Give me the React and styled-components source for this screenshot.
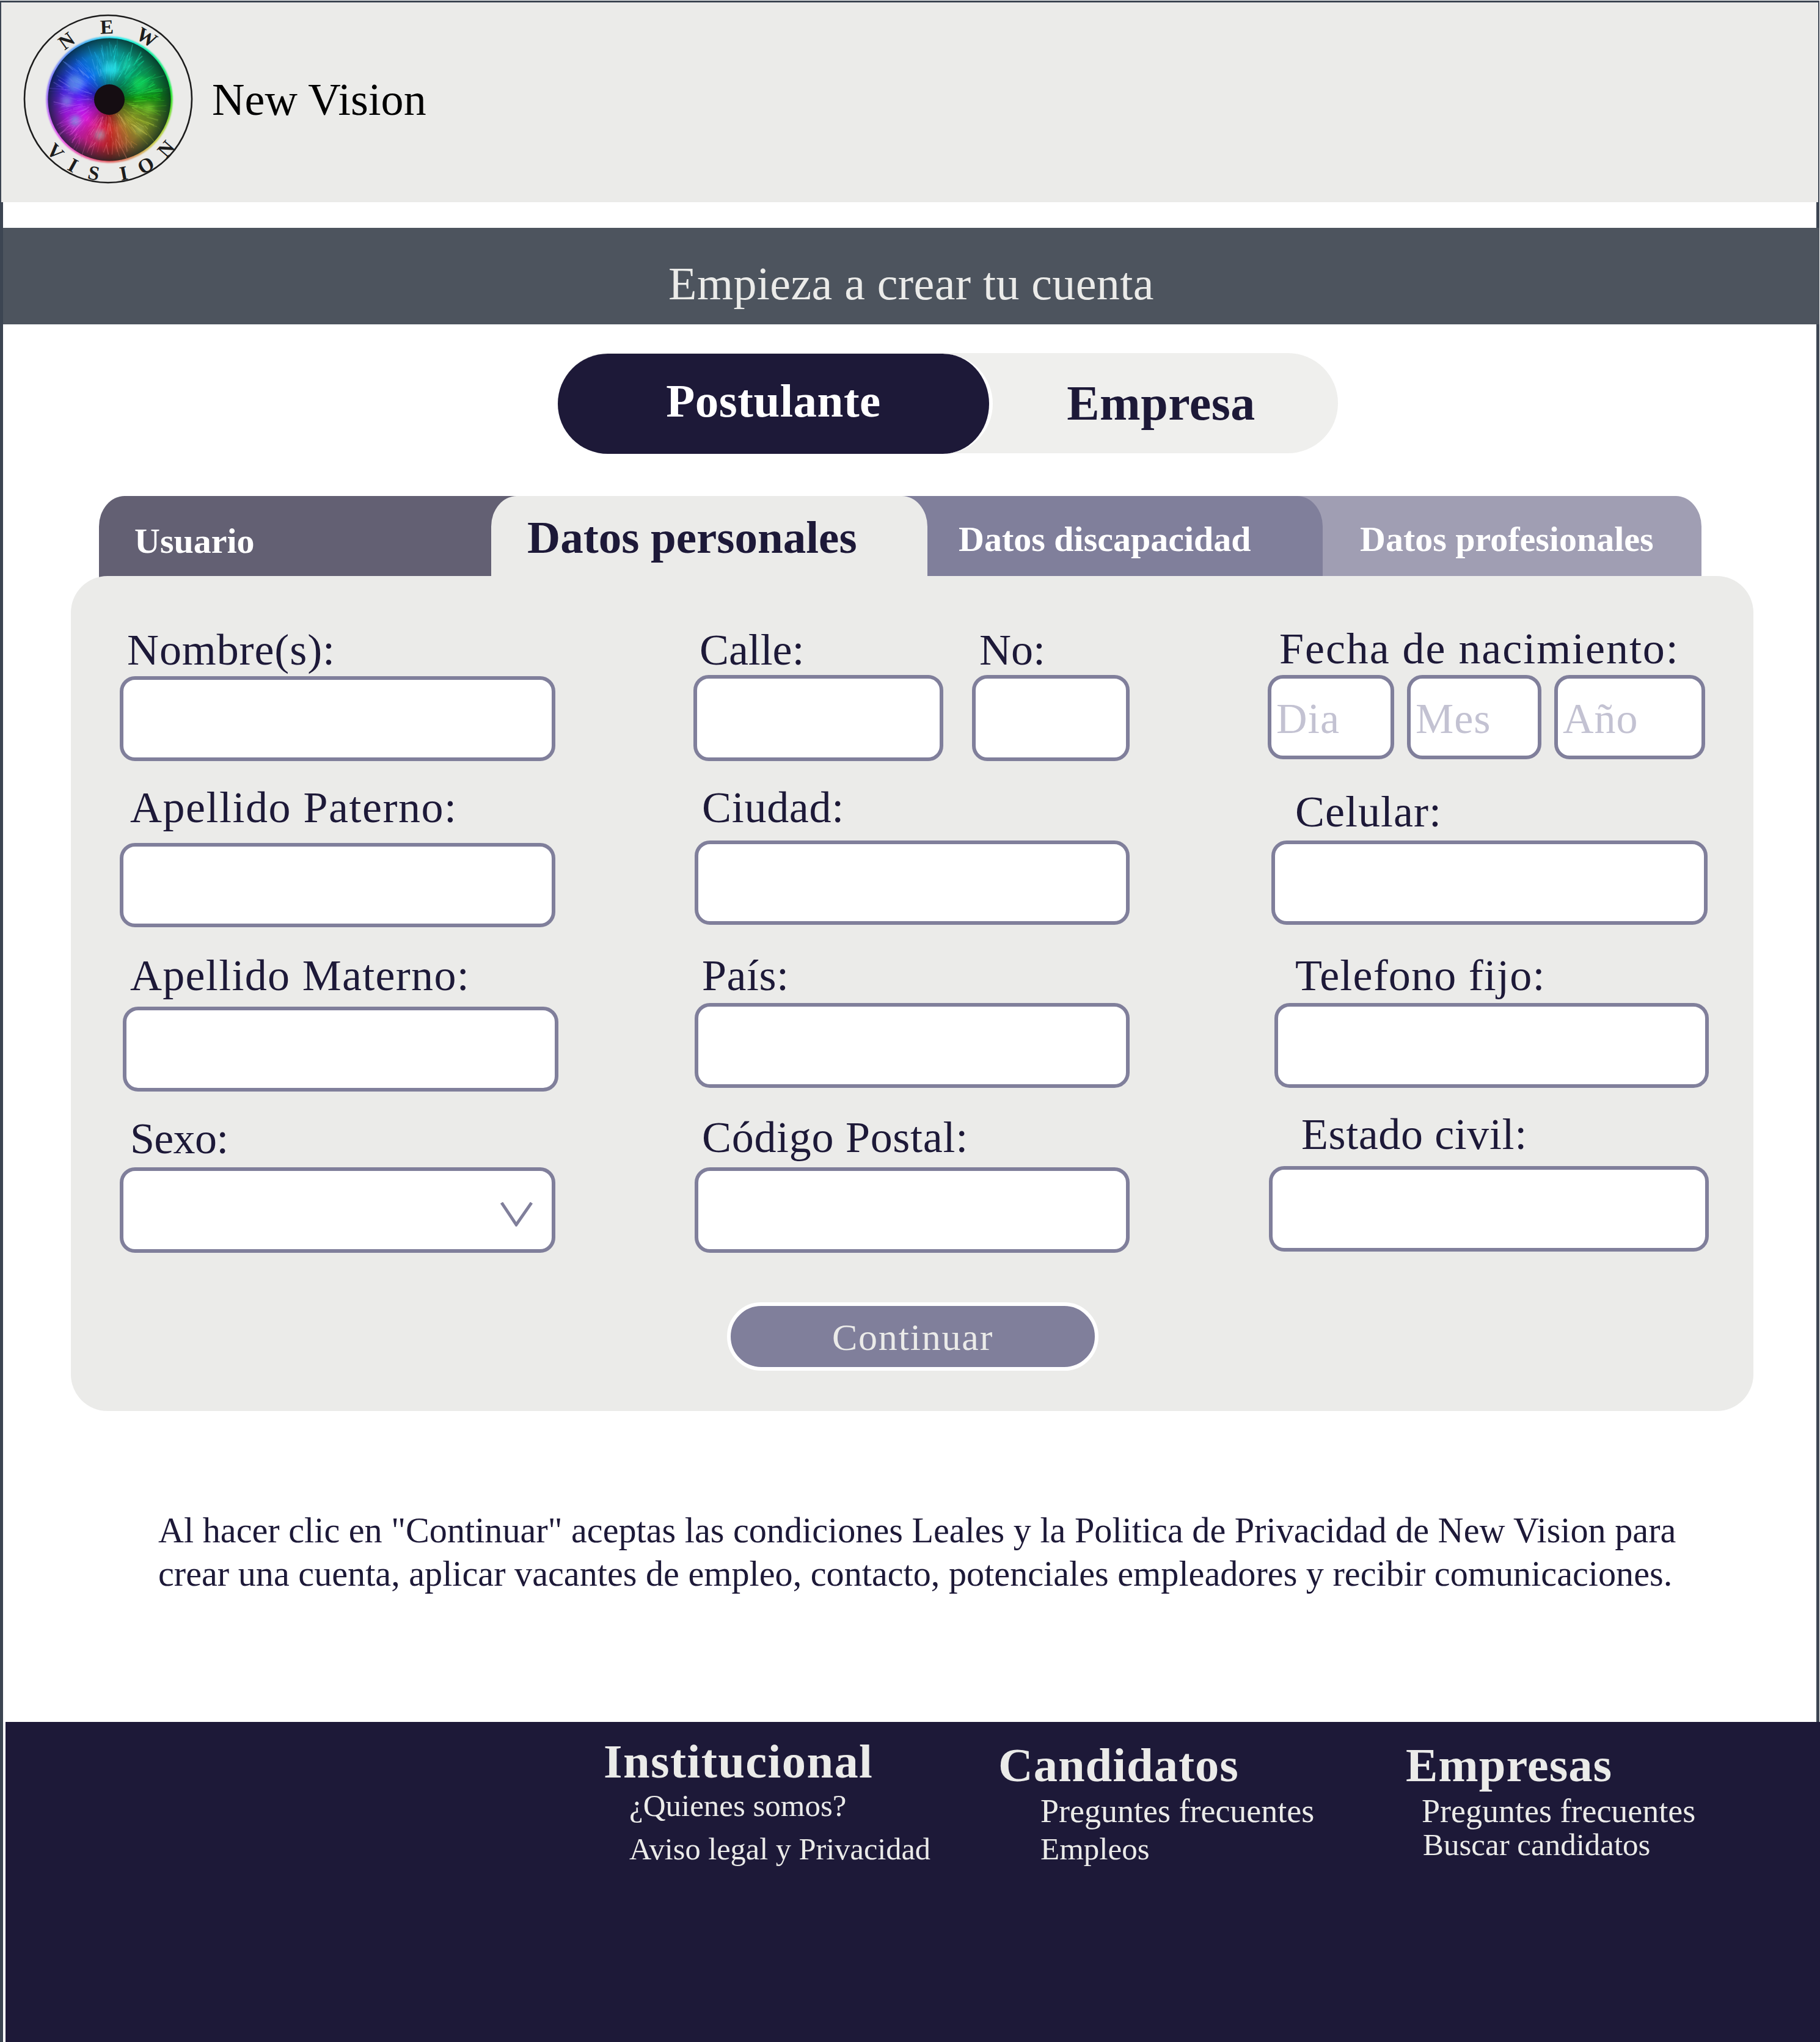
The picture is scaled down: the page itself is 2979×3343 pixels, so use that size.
import React from 'react'
import styled, { createGlobalStyle } from 'styled-components'

const GlobalStyle = createGlobalStyle`
  html, body { margin: 0; padding: 0; background: #fff; }
  body { font-family: 'Liberation Serif', serif; }
  * { box-sizing: border-box; }
`

const navy = '#1d1938'
const paper = '#ebebe9'
const lilac = '#807f9b'
const slate = '#3c4552'

const Page = styled.div`
  position: relative;
  width: 2978px;
  height: 3342px;
  margin-top: 1px;
  background: #fff;
  border-left: 5px solid ${slate};
  border-right: 5px solid ${slate};
  display: flex;
  flex-direction: column;
`

const Header = styled.header`
  height: 330px;
  margin: 0 -5px 0 -5px;
  background: ${paper};
  border-top: 3px solid ${slate};
  border-left: 2px solid ${slate};
  border-right: 2px solid ${slate};
  display: flex;
  align-items: flex-start;
  padding: 18px 0 0 36px;
`

const Brand = styled.div`
  font-size: 74px;
  letter-spacing: 0.1px;
  line-height: 80px;
  color: #000;
  margin: 101px 0 0 27px;
`

const Banner = styled.h1`
  margin: 42px -5px 0 0;
  height: 158px;
  background: #4d545e;
  color: ${paper};
  font-size: 76px;
  font-weight: 400;
  letter-spacing: 0.4px;
  line-height: 182px;
  text-align: center;
`

const Toggle = styled.div`
  align-self: flex-start;
  margin: 47px 0 0 908px;
  width: 1277px;
  height: 164px;
  border-radius: 82px;
  background: #efefed;
  display: flex;
`

const ToggleItem = styled.div`
  height: ${p => (p.$active ? '164px' : '164px')};
  margin-top: ${p => (p.$active ? '1px' : '0')};
  width: ${p => (p.$active ? '712px' : '565px')};
  padding-right: ${p => (p.$active ? '0' : '14px')};
  border-radius: 82px;
  background: ${p => (p.$active ? navy : 'transparent')};
  border-right: ${p => (p.$active ? '6px solid #fff' : '0')};
  color: ${p => (p.$active ? '#fff' : navy)};
  font-size: ${p => (p.$active ? '77px' : '80px')};
  font-weight: 700;
  line-height: ${p => (p.$active ? '154px' : '164px')};
  text-align: center;
  letter-spacing: 0.5px;
`

const Tabs = styled.div`
  display: flex;
  margin: 70px 0 0 157px;
  height: 133px;
`

const Tab = styled.div`
  position: relative;
  z-index: ${p => p.$z};
  width: ${p => p.$w}px;
  margin-left: ${p => p.$ml || 0}px;
  padding-left: ${p => p.$pl}px;
  border-radius: 42px 42px 0 0 / 50px 50px 0 0;
  background: ${p => p.$bg};
  color: ${p => p.$color || '#fff'};
  font-size: ${p => p.$size || 58}px;
  font-weight: 700;
  line-height: ${p => p.$lh || 148}px;
  white-space: nowrap;
`

const Panel = styled.section`
  position: relative;
  z-index: 5;
  margin: -2px 0 0 111px;
  width: 2754px;
  height: 1367px;
  border-radius: 60px;
  background: ${paper};
  padding: 91px 0 0 80px;
`

const Columns = styled.div`
  display: grid;
  grid-template-columns: 939px 940px 730px;
`

const Column = styled.div`
  display: flex;
  flex-direction: column;
`

const Row = styled.div`
  display: flex;
`

const Field = styled.div`
  margin-top: ${p => p.$mt || 0}px;
  margin-left: ${p => p.$x || 0}px;
  width: ${p => p.$w}px;
`

const Label = styled.label`
  display: block;
  height: 60px;
  line-height: 60px;
  margin-left: ${p => p.$ml || 0}px;
  margin-bottom: ${p => p.$mb || 0}px;
  color: ${navy};
  font-size: 72px;
  letter-spacing: ${p => p.$ls ?? 1.3}px;
  white-space: nowrap;
`

const Input = styled.input`
  display: block;
  width: 100%;
  height: ${p => p.$h || 139}px;
  background: #fff;
  border: 6px solid ${lilac};
  border-radius: 25px;
  padding: 6px 8px 0;
  font-family: 'Liberation Serif', serif;
  font-size: 70px;
  letter-spacing: 1px;
  outline: none;
  &::placeholder { color: #c3c2d2; opacity: 1; }
`

const DateRow = styled.div`
  display: flex;
  margin-top: 13px;
`

const DateInput = styled(Input)`
  width: ${p => p.$w}px;
  margin-left: ${p => p.$ml || 0}px;
  flex: none;
`

const SelectBox = styled.div`
  position: relative;
`

const Chevron = styled.svg`
  position: absolute;
  right: 37px;
  top: 57px;
  width: 53px;
  height: 40px;
  pointer-events: none;
`

const Actions = styled.div`
  margin: 81px 0 0 994px;
`

const ContinueButton = styled.button`
  display: block;
  width: 608px;
  height: 112px;
  border: 6px solid #fff;
  border-radius: 56px;
  background: ${lilac};
  color: ${paper};
  font-family: 'Liberation Serif', serif;
  font-size: 62px;
  letter-spacing: 1.8px;
  padding: 2px 0 0;
`

const Legal = styled.p`
  margin: 160px 0 0 254px;
  color: ${navy};
  font-size: 58.2px;
  line-height: 71px;
  white-space: nowrap;
`

const Footer = styled.footer`
  position: absolute;
  left: 4px;
  right: -6px;
  top: 2818px;
  height: 525px;
  background: ${navy};
  display: flex;
  padding-left: 979px;
`

const FooterColumn = styled.div`
  width: ${p => p.$w}px;
  color: ${paper};
`

const FooterTitle = styled.h3`
  margin: ${p => p.$mt}px 0 0;
  height: 80px;
  line-height: 80px;
  font-size: 78.5px;
  font-weight: 700;
  letter-spacing: ${p => p.$ls ?? 1}px;
  white-space: nowrap;
`

const FooterLink = styled.a`
  display: block;
  height: 60px;
  line-height: 60px;
  margin-top: ${p => p.$mt}px;
  margin-left: ${p => p.$ml}px;
  font-size: ${p => p.$size || 51}px;
  white-space: nowrap;
`

// colour wheel of the iris, hue by angle clockwise from the top
const hueStops = [
  [0, 186, 85, 38], [40, 160, 88, 32], [75, 138, 85, 34], [110, 85, 65, 34],
  [140, 55, 55, 38], [165, 15, 62, 46], [190, 348, 75, 48], [225, 305, 78, 46],
  [260, 275, 88, 52], [300, 232, 90, 56], [335, 205, 90, 46], [360, 186, 85, 38],
]

const colourAt = (deg, lift = 0) => {
  let i = 0
  while (deg > hueStops[i + 1][0]) i++
  const [a, h1, s1, l1] = hueStops[i]
  const [b, h2, s2, l2] = hueStops[i + 1]
  const t = (deg - a) / (b - a)
  let dh = h2 - h1
  if (dh > 180) dh -= 360
  if (dh < -180) dh += 360
  return `hsl(${h1 + dh * t} ${s1 + (s2 - s1) * t}% ${l1 + (l2 - l1) * t + lift}%)`
}

const polar = (r, deg) => {
  const a = ((deg - 90) * Math.PI) / 180
  return [r * Math.cos(a), r * Math.sin(a)]
}

const wedge = (r, from, to) => {
  const [x1, y1] = polar(r, from)
  const [x2, y2] = polar(r, to)
  return `M0 0L${x1} ${y1}A${r} ${r} 0 0 1 ${x2} ${y2}Z`
}

const wedges = Array.from({ length: 120 }, (_, i) => i * 3)

let seed = 11
const rand = () => {
  seed = (seed * 16807) % 2147483647
  return seed / 2147483647
}

const fibres = Array.from({ length: 380 }, () => {
  const deg = rand() * 359
  const r1 = 26 + rand() * 52
  const r2 = r1 + 8 + rand() * 20
  const [x1, y1] = polar(r1, deg)
  const [x2, y2] = polar(r2, deg + (rand() - 0.5) * 8)
  return { x1, y1, x2, y2, c: colourAt(deg, 8 + rand() * 16), o: 0.15 + rand() * 0.3, w: 0.7 + rand() * 1.1 }
})

// the pale streaks that stand out in the iris
const streaks = [
  [3, 50, 13, '#30f0ff'], [28, 64, 9, '#20e8c0'], [62, 58, 12, '#10f060'], [103, 66, 8, '#9cf040'],
  [295, 62, 14, '#7fc4ff'], [268, 70, 9, '#8fb8ff'], [238, 66, 9, '#70e0ff'], [195, 60, 8, '#90e8e8'],
  [135, 70, 6, '#c0e070'],
]

const topLetters = [['N', -36], ['E', -2], ['W', 31]]
const bottomLetters = [['V', 46], ['I', 29], ['S', 12], ['I', -11], ['O', -29], ['N', -49]]

const LogoLetter = styled.text`
  font-family: 'Liberation Serif', serif;
  font-size: 33px;
  font-weight: 700;
  fill: #1c1c1c;
  text-anchor: middle;
`

const Logo = () => (
  <svg width="282" height="282" viewBox="-141 -141 282 282" style={{ flex: 'none' }}>
    <defs>
      <radialGradient id="irisShade">
        <stop offset="0.25" stopColor="#000" stopOpacity="0.3" />
        <stop offset="0.48" stopColor="#000" stopOpacity="0" />
        <stop offset="0.75" stopColor="#06201f" stopOpacity="0.14" />
        <stop offset="1" stopColor="#06201f" stopOpacity="0.75" />
      </radialGradient>
      <filter id="soft"><feGaussianBlur stdDeviation="1" /></filter>
      <filter id="softer"><feGaussianBlur stdDeviation="4" /></filter>
      <filter id="fine"><feGaussianBlur stdDeviation="0.5" /></filter>
    </defs>
    <circle r="137" cx="-2" cy="-1" fill="none" stroke="#1c1c1c" strokeWidth="2.6" />
    <g>
      <g filter="url(#soft)">
        {wedges.map(d => <path key={d} d={wedge(103.5, d, d + 3.4)} fill={colourAt(d + 1.5, 18)} />)}
      </g>
      {wedges.map(d => <path key={d} d={wedge(100.5, d, d + 3.4)} fill={colourAt(d + 1.5)} />)}
      <g filter="url(#softer)">
        {streaks.map(([deg, r, size, c], i) => {
          const [x, y] = polar(r, deg)
          return <circle key={i} cx={x} cy={y} r={size} fill={c} fillOpacity="0.6" />
        })}
      </g>
      <circle r="100.5" fill="url(#irisShade)" />
      <g filter="url(#fine)">
        {fibres.map((f, i) => (
          <line key={i} x1={f.x1} y1={f.y1} x2={f.x2} y2={f.y2} stroke={f.c} strokeOpacity={f.o} strokeWidth={f.w} />
        ))}
      </g>
      <circle r="25" fill="#150d12" />
    </g>
    {topLetters.map(([ch, a]) => (
      <LogoLetter key={ch} transform={`rotate(${a}) translate(0 -108)`}>{ch}</LogoLetter>
    ))}
    {bottomLetters.map(([ch, a]) => (
      <LogoLetter key={a} transform={`rotate(${a}) translate(0 134)`}>{ch}</LogoLetter>
    ))}
  </svg>
)

export default function App() {
  return (
    <Page>
      <GlobalStyle />
      <Header>
        <Logo />
        <Brand>New Vision</Brand>
      </Header>
      <Banner>Empieza a crear tu cuenta</Banner>
      <Toggle>
        <ToggleItem $active>Postulante</ToggleItem>
        <ToggleItem>Empresa</ToggleItem>
      </Toggle>
      <Tabs>
        <Tab $z={1} $w={760} $pl={58} $bg="#636073">Usuario</Tab>
        <Tab $z={4} $w={714} $ml={-118} $pl={59} $bg={paper} $color={navy} $size={75} $lh={136}>Datos personales</Tab>
        <Tab $z={3} $w={747} $ml={-100} $pl={151} $bg={lilac} $lh={142}>Datos discapacidad</Tab>
        <Tab $z={2} $w={710} $ml={-90} $pl={151} $bg="#a09eb3" $lh={142}>Datos profesionales</Tab>
      </Tabs>
      <Panel>
        <Columns>
          <Column>
            <Field $w={713}>
              <Label $ml={12} $mb={13} $ls={0.9}>Nombre(s):</Label>
              <Input />
            </Field>
            <Field $w={713} $mt={46}>
              <Label $ml={17} $mb={28} $ls={1.5}>Apellido Paterno:</Label>
              <Input $h={138} />
            </Field>
            <Field $w={713} $mt={49} $x={5}>
              <Label $ml={12} $mb={21}>Apellido Materno:</Label>
              <Input />
            </Field>
            <Field $w={713} $mt={47}>
              <Label $ml={17} $mb={17} $ls={-0.7}>Sexo:</Label>
              <SelectBox>
                <Input $h={140} />
                <Chevron viewBox="0 0 53 40" fill="none" stroke={lilac} strokeWidth="5">
                  <path d="M2 1L26 37L51 1" />
                </Chevron>
              </SelectBox>
            </Field>
          </Column>
          <Column>
            <Row>
              <Field $w={409}>
                <Label $ml={10} $mb={11} $ls={-0.1}>Calle:</Label>
                <Input $h={141} />
              </Field>
              <Field $w={258} $x={47}>
                <Label $ml={12} $mb={11} $ls={0}>No:</Label>
                <Input $h={141} />
              </Field>
            </Row>
            <Field $w={712} $mt={46} $x={2}>
              <Label $ml={12} $mb={24} $ls={0.7}>Ciudad:</Label>
              <Input $h={138} />
            </Field>
            <Field $w={712} $mt={53} $x={2}>
              <Label $ml={12} $mb={15} $ls={0.5}>País:</Label>
              <Input />
            </Field>
            <Field $w={712} $mt={51} $x={2}>
              <Label $ml={12} $mb={19} $ls={0.7}>Código Postal:</Label>
              <Input $h={140} />
            </Field>
          </Column>
          <Column>
            <Field $w={730} $mt={-2}>
              <Label $ml={19} $mb={0} $ls={1.95}>Fecha de nacimiento:</Label>
              <DateRow>
                <DateInput $w={207} $h={138} placeholder="Dia" />
                <DateInput $w={220} $h={138} $ml={21} placeholder="Mes" />
                <DateInput $w={247} $h={138} $ml={21} placeholder="Año" />
              </DateRow>
            </Field>
            <Field $w={714} $mt={56} $x={6}>
              <Label $ml={39} $mb={17} $ls={1}>Celular:</Label>
              <Input $h={138} />
            </Field>
            <Field $w={711} $mt={53} $x={11}>
              <Label $ml={34} $mb={15} $ls={1.2}>Telefono fijo:</Label>
              <Input />
            </Field>
            <Field $w={720} $mt={46} $x={2}>
              <Label $ml={53} $mb={22} $ls={0.6}>Estado civil:</Label>
              <Input $h={140} />
            </Field>
          </Column>
        </Columns>
        <Actions>
          <ContinueButton>Continuar</ContinueButton>
        </Actions>
      </Panel>
      <Legal>
        Al hacer clic en "Continuar" aceptas las condiciones Leales y la Politica de Privacidad de New Vision para<br />
        crear una cuenta, aplicar vacantes de empleo, contacto, potenciales empleadores y recibir comunicaciones.
      </Legal>
      <Footer>
        <FooterColumn $w={646}>
          <FooterTitle $mt={25} $ls={1.4}>Institucional</FooterTitle>
          <FooterLink $mt={2} $ml={42}>¿Quienes somos?</FooterLink>
          <FooterLink $mt={11} $ml={42} $size={50.4}>Aviso legal y Privacidad</FooterLink>
        </FooterColumn>
        <FooterColumn $w={667}>
          <FooterTitle $mt={31}>Candidatos</FooterTitle>
          <FooterLink $mt={5} $ml={69} $size={54}>Preguntes frecuentes</FooterLink>
          <FooterLink $mt={2} $ml={69}>Empleos</FooterLink>
        </FooterColumn>
        <FooterColumn $w={650}>
          <FooterTitle $mt={31}>Empresas</FooterTitle>
          <FooterLink $mt={5} $ml={26} $size={54}>Preguntes frecuentes</FooterLink>
          <FooterLink $mt={-5} $ml={28}>Buscar candidatos</FooterLink>
        </FooterColumn>
      </Footer>
    </Page>
  )
}
